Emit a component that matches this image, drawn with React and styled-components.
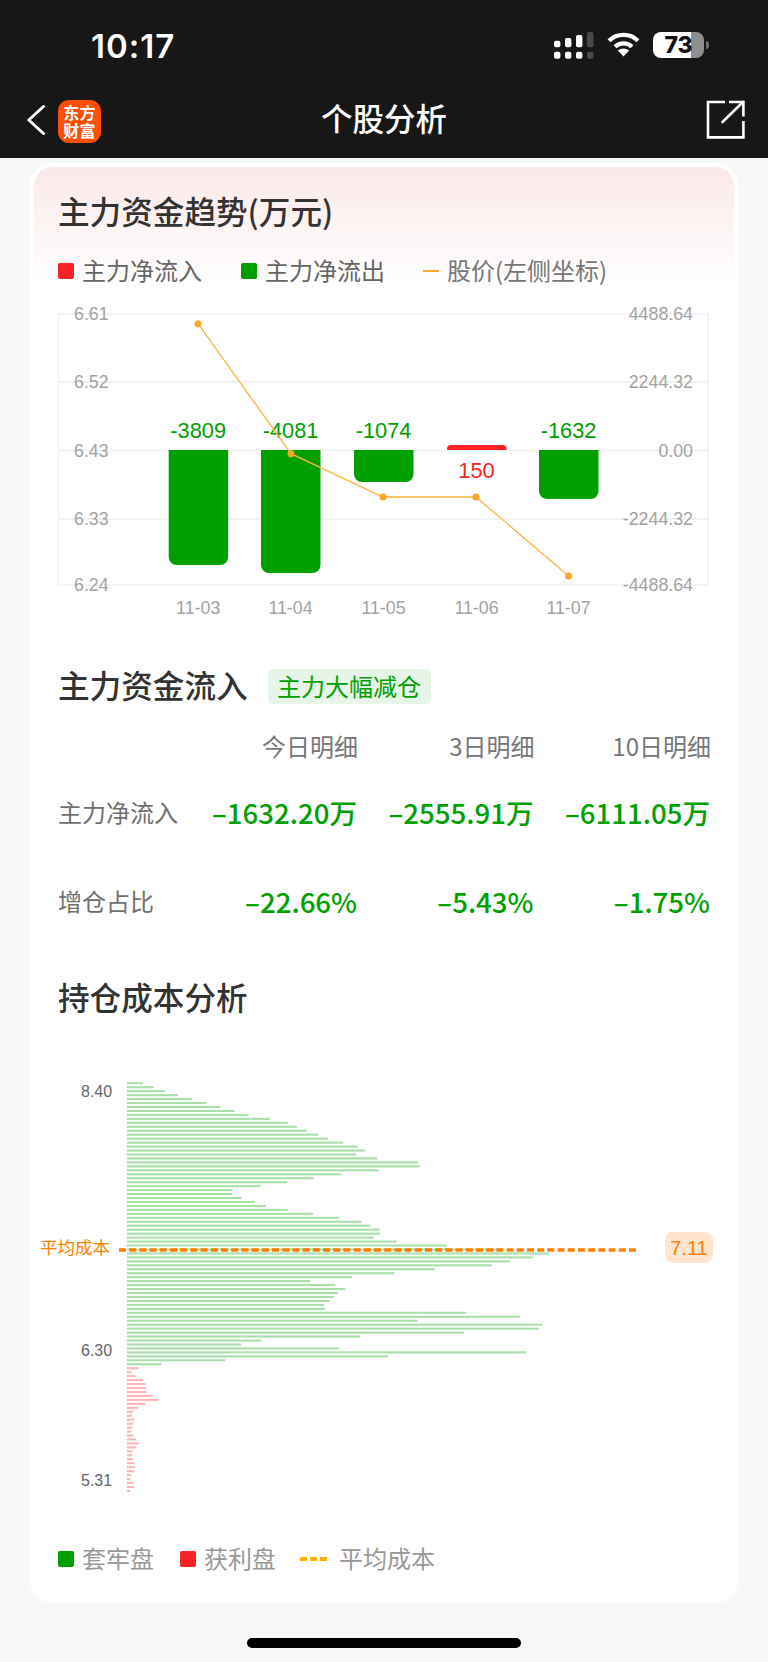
import React from 'react'
import styled, { createGlobalStyle } from 'styled-components'

const GlobalStyle = createGlobalStyle`
  html, body {
    margin: 0;
    padding: 0;
    background: #f7f8fa;
  }
  * {
    box-sizing: border-box;
  }
`

const GREEN = '#009f00'
const RED = '#f92225'

const flowBars = [
  { x: 168.7, date: '11-03', bottom: 565, label: '-3809' },
  { x: 261, date: '11-04', bottom: 573, label: '-4081' },
  { x: 354, date: '11-05', bottom: 482, label: '-1074' },
  { x: 447, date: '11-06', top: 445, label: '150' },
  { x: 539, date: '11-07', bottom: 499, label: '-1632' },
]
const pricePoints = [[198, 323.7], [291, 453.7], [383, 497], [476, 497], [568.6, 576]]
const leftAxis = [['6.61', 314], ['6.52', 382], ['6.43', 450.5], ['6.33', 519], ['6.24', 585]]
const rightAxis = [['4488.64', 314], ['2244.32', 382], ['0.00', 450.5], ['-2244.32', 519], ['-4488.64', 585]]

const lossChips = [
  16.1, 26.6, 38.1, 51, 65.2, 79, 93.2, 107.4, 121.7, 142.8, 160.7, 169.9, 180, 191, 201.1, 216.3, 230.9, 237.8,
  229.1, 250.2, 291.1, 292.9, 252.1, 214.4, 186.9, 160.2, 133.6, 105.6, 105.1, 114.8, 128.1, 139.1, 160.7, 186,
  212.1, 234.6, 243.3, 252.5, 253.4, 246.6, 269.5, 320, 374.7, 421.9, 405.9, 382.9, 364.6, 308, 267.2, 225, 183.2,
  208.4, 218.5, 210.7, 207, 202.9, 197, 197.9, 339.3, 393, 290.6, 415.5, 411.8, 337, 233.2, 134.5, 114.3, 212.1,
  399.4, 261.2, 98.3, 34.4,
]
const profitChips = [
  11.7, 4.5, 8.6, 16.2, 18.6, 18.9, 19.6, 25.8, 31.7, 18.3, 11, 6.2, 5.2, 7.6, 6.5, 5.2, 4.5, 6.5, 9.3, 12, 9.3,
  5.5, 5.2, 6.2, 7.6, 7.9, 7.2, 4.5, 3.4, 6.5, 7.2, 3.1,
]
const CHIP_TOP = 1083.2
const CHIP_PITCH = 3.958

function barPath(bar) {
  const w = 59.5
  if (bar.top) {
    return `M${bar.x} 450V449a4 4 0 0 1 4-4H${bar.x + w - 4}a4 4 0 0 1 4 4V450Z`
  }
  return `M${bar.x} 450V${bar.bottom - 8}a8 8 0 0 0 8 8H${bar.x + w - 8}a8 8 0 0 0 8-8V450Z`
}

export default function App() {
  return (
    <Page>
      <GlobalStyle />
      <Header>
        <StatusBar>
          <Clock>10:17</Clock>
          <StatusIcons>
            <SignalIcon />
            <WifiIcon />
            <Battery>
              <BatteryLevel>73</BatteryLevel>
              <BatteryCap />
            </Battery>
          </StatusIcons>
        </StatusBar>
        <NavBar>
          <BackIcon />
          <Logo>
            <span>东方</span>
            <span>财富</span>
          </Logo>
          <NavTitle>个股分析</NavTitle>
          <ShareIcon />
        </NavBar>
      </Header>

      <Card>
        <CardTitle>主力资金趋势(万元)</CardTitle>
        <Legend $top={22}>
          <LegendItem $color="#666" $width={183}><Swatch $color={RED} />主力净流入</LegendItem>
          <LegendItem $color="#666" $width={182}><Swatch $color={GREEN} />主力净流出</LegendItem>
          <LegendItem $color="#777"><LegendLine />股价(左侧坐标)</LegendItem>
        </Legend>
        <FlowChart />

        <SectionHead>
          <SectionTitle>主力资金流入</SectionTitle>
          <Badge>主力大幅减仓</Badge>
        </SectionHead>
        <DetailTable>
          <HeadRow>
            <span />
            <span>今日明细</span>
            <span>3日明细</span>
            <span>10日明细</span>
          </HeadRow>
          <DataRow>
            <RowLabel>主力净流入</RowLabel>
            <Value>–1632.20万</Value>
            <Value>–2555.91万</Value>
            <Value>–6111.05万</Value>
          </DataRow>
          <DataRow>
            <RowLabel>增仓占比</RowLabel>
            <Value>–22.66%</Value>
            <Value>–5.43%</Value>
            <Value>–1.75%</Value>
          </DataRow>
        </DetailTable>

        <CostTitle>持仓成本分析</CostTitle>
        <ChipChart />
        <Legend $top={44}>
          <LegendItem $color="#999" $width={122}><Swatch $color={GREEN} />套牢盘</LegendItem>
          <LegendItem $color="#999" $width={120}><Swatch $color={RED} />获利盘</LegendItem>
          <LegendItem $color="#999"><LegendDash />平均成本</LegendItem>
        </Legend>
      </Card>
      <HomeBar />
    </Page>
  )
}

function FlowChart() {
  return (
    <ChartSvg $top={13} width="699" height="325" viewBox="34 300 699 325">
      <rect x="58.5" y="314" width="649.5" height="271" fill="none" stroke="#eee" strokeWidth="1.2" />
      {[382, 450.5, 519].map((y) => (
        <line key={y} x1="58.5" x2="708" y1={y} y2={y} stroke="#eee" strokeWidth="1.6" />
      ))}
      {leftAxis.map(([text, y]) => (
        <AxisText key={text} x="74" y={y + 6}>{text}</AxisText>
      ))}
      {rightAxis.map(([text, y]) => (
        <AxisText key={text} x="693" y={y + 6} textAnchor="end">{text}</AxisText>
      ))}
      {flowBars.map((bar) => (
        <g key={bar.date}>
          <path d={barPath(bar)} fill={bar.top ? RED : GREEN} />
          <BarLabel x={bar.x + 29.5} y={bar.top ? 477.5 : 437.5} fill={bar.top ? RED : GREEN}>{bar.label}</BarLabel>
          <AxisText x={bar.x + 29.5} y="614" textAnchor="middle">{bar.date}</AxisText>
        </g>
      ))}
      <polyline points={pricePoints.map((p) => p.join(',')).join(' ')} fill="none" stroke="#ffb23f" strokeWidth="1.3" />
      {pricePoints.map(([x, y]) => (
        <circle key={x} cx={x} cy={y} r="3.5" fill="#fba725" />
      ))}
    </ChartSvg>
  )
}

function ChipChart() {
  const chips = [
    ...lossChips.map((w) => ({ w, color: '#a9e0a9' })),
    ...profitChips.map((w) => ({ w, color: '#ffb5b6' })),
  ]
  return (
    <ChartSvg $top={53} width="699" height="430" viewBox="34 1070 699 430">
      <PriceText x="81" y="1098">8.40</PriceText>
      <PriceText x="81" y="1357">6.30</PriceText>
      <PriceText x="81" y="1487">5.31</PriceText>
      {chips.map((chip, i) => (
        <rect key={i} x="127" y={CHIP_TOP + i * CHIP_PITCH} width={chip.w} height="2.1" fill={chip.color} />
      ))}
      <AvgText x="40" y="1255">平均成本</AvgText>
      <line x1="119" x2="636" y1="1251" y2="1251" stroke="#ff8000" strokeWidth="3.6" strokeDasharray="7 3.2" />
      <rect x="665" y="1233" width="48" height="31" rx="8" fill="#ffe5cf" />
      <AvgValue x="689" y="1256" textAnchor="middle">7.11</AvgValue>
    </ChartSvg>
  )
}

function SignalIcon() {
  const cols = [[553, 40.7], [564, 38], [575, 35], [586, 32]]
  return (
    <svg width="40" height="28" viewBox="553 32 40 28">
      {cols.map(([x, top], i) => (
        <g key={x} fill={i === 3 ? '#4a4a4a' : '#fff'}>
          <rect x={x} y={top} width="6.4" height={47.3 - top} rx="2" />
          <rect x={x} y="51.7" width="6.4" height="7" rx="2" />
        </g>
      ))}
    </svg>
  )
}

function WifiIcon() {
  return (
    <svg width="33" height="25" viewBox="0 0 33 25">
      <g fill="none" stroke="#fff" strokeWidth="4.2">
        <path d="M2 8.8C10 1 23 1 31 8.8" />
        <path d="M8 14.8C12.8 10.2 20.2 10.2 25 14.8" />
      </g>
      <path d="M10.8 18.6C14 15.8 19 15.8 22.2 18.6L16.5 24.6Z" fill="#fff" />
    </svg>
  )
}

function BackIcon() {
  return (
    <BackSvg width="18" height="32" viewBox="0 0 18 32">
      <path d="M16.5 2.5L1.8 16L16.5 29.5" fill="none" stroke="#fff" strokeWidth="3" strokeLinecap="round" strokeLinejoin="round" />
    </BackSvg>
  )
}

function ShareIcon() {
  return (
    <ShareSvg width="39" height="39" viewBox="0 0 39 39">
      <g fill="none" stroke="#fff" strokeWidth="2.6">
        <path d="M19 2H2V37.4H37.4V21" />
        <path d="M23 2H37.4V16.5" />
        <path d="M37 2L16.5 22" strokeLinecap="round" />
      </g>
    </ShareSvg>
  )
}

const Page = styled.div`
  width: 768px;
  height: 1662px;
  overflow: hidden;
  background: #f7f8fa;
  font-family: "Noto Sans CJK SC", "Liberation Sans", sans-serif;
`

const Header = styled.header`
  height: 158px;
  background: #171717;
  color: #fff;
`

const StatusBar = styled.div`
  height: 85px;
  padding: 32px 59px 0 91px;
  display: flex;
  justify-content: space-between;
  align-items: flex-start;
`

const Clock = styled.div`
  font-family: Inter, "Liberation Sans", sans-serif;
  font-size: 33px;
  font-weight: 600;
  line-height: 28px;
  letter-spacing: 1px;
`

const StatusIcons = styled.div`
  display: flex;
  align-items: flex-start;
  gap: 13px;
  height: 28px;
`

const Battery = styled.div`
  display: flex;
  align-items: center;
  gap: 2px;
`

const BatteryLevel = styled.div`
  width: 51px;
  height: 26px;
  border-radius: 8px;
  background: linear-gradient(90deg, #fff 37.7px, #8e8e8e 37.7px);
  color: #111;
  font-family: Inter, "Liberation Sans", sans-serif;
  font-size: 23px;
  font-weight: 800;
  line-height: 26px;
  text-align: center;
`

const BatteryCap = styled.div`
  width: 3px;
  height: 8px;
  border-radius: 0 3px 3px 0;
  background: #6f6f6f;
`

const NavBar = styled.nav`
  height: 73px;
  padding-left: 27px;
  display: flex;
  align-items: center;
`

const BackSvg = styled.svg`
  display: block;
  margin-top: -3px;
`

const Logo = styled.div`
  width: 43px;
  height: 43px;
  margin: -1px 0 0 13px;
  border-radius: 11px;
  background: #fb4e06;
  color: #fff;
  font-size: 16px;
  font-weight: 700;
  line-height: 18px;
  letter-spacing: 0.2px;
  display: flex;
  flex-direction: column;
  align-items: center;
  justify-content: center;
`

const NavTitle = styled.div`
  margin: -9px 0 0 220px;
  font-size: 31.5px;
  font-weight: 500;
  line-height: 42px;
  white-space: nowrap;
`

const ShareSvg = styled.svg`
  display: block;
  margin: -5px 23px 0 auto;
`

const Card = styled.section`
  width: 708px;
  height: 1440px;
  margin: 5px 0 0 30px;
  padding: 26px 24px 0 24px;
  border: 4px solid #fff;
  border-radius: 22px;
  background: linear-gradient(#fbe8e8, #fff 118px) padding-box, #fff;
`

const CardTitle = styled.h2`
  margin: -3px 0 0;
  padding-bottom: 3px;
  color: #333;
  font-size: 31.6px;
  font-weight: 500;
  line-height: 40px;
`

const Legend = styled.div`
  display: flex;
  margin-top: ${(p) => p.$top}px;
  height: 32px;
`

const LegendItem = styled.div`
  display: flex;
  align-items: center;
  width: ${(p) => (p.$width ? `${p.$width}px` : 'auto')};
  padding-bottom: 3px;
  color: ${(p) => p.$color};
  font-size: 24px;
  line-height: 29px;
  white-space: nowrap;
`

const Swatch = styled.i`
  width: 16px;
  height: 16px;
  margin: 3px 8px 0 0;
  border-radius: 2px;
  background: ${(p) => p.$color};
`

const LegendLine = styled.i`
  width: 16px;
  height: 2px;
  margin: 3px 8px 0 0;
  background: #ffa53a;
`

const LegendDash = styled.i`
  width: 27px;
  height: 3.5px;
  margin: 3px 12px 0 0;
  background: repeating-linear-gradient(90deg, #ffb000 0 7px, transparent 7px 10px);
`

const ChartSvg = styled.svg`
  display: block;
  margin-left: -24px;
  margin-top: ${(p) => p.$top || 0}px;
`

const AxisText = styled.text`
  fill: #a3a3a3;
  font-family: "Liberation Sans", sans-serif;
  font-size: 17.8px;
`

const BarLabel = styled.text`
  font-family: "Liberation Sans", sans-serif;
  font-size: 21.8px;
  text-anchor: middle;
`

const PriceText = styled.text`
  fill: #666;
  font-family: "Liberation Sans", sans-serif;
  font-size: 16px;
`

const AvgText = styled.text`
  fill: #ff8000;
  font-size: 17.5px;
`

const AvgValue = styled.text`
  fill: #ff8000;
  font-family: "Liberation Sans", sans-serif;
  font-size: 20px;
`

const SectionHead = styled.div`
  display: flex;
  align-items: center;
  margin-top: 42px;
  height: 40px;
`

const SectionTitle = styled.h3`
  margin: -3px 0 0;
  padding-bottom: 3px;
  color: #333;
  font-size: 31.6px;
  font-weight: 500;
  line-height: 40px;
`

const Badge = styled.span`
  margin: -1px 0 0 20px;
  height: 35px;
  padding: 0 9.5px;
  border-radius: 5px;
  background: #e7f5e9;
  color: #00a000;
  font-size: 24px;
  line-height: 34px;
`

const DetailTable = styled.div`
  margin-top: 18px;
`

const rowColumns = `
  display: grid;
  grid-template-columns: 1fr 176.5px 176.5px 176.5px;
  align-items: center;
  text-align: right;
`

const HeadRow = styled.div`
  ${rowColumns}
  height: 40px;
  margin: 0 -1px 2px 0;
  color: #777;
  font-size: 24px;
`

const DataRow = styled.div`
  ${rowColumns}
  height: 89px;
`

const RowLabel = styled.span`
  color: #707070;
  font-size: 24px;
  text-align: left;
  white-space: nowrap;
`

const Value = styled.span`
  color: #00a000;
  font-size: 27.6px;
  font-weight: 500;
  white-space: nowrap;
`

const CostTitle = styled(SectionTitle)`
  margin: 31px 0 0;
  padding-bottom: 0;
`

const HomeBar = styled.div`
  width: 274px;
  height: 9.5px;
  margin: 35px 0 0 247px;
  border-radius: 5px;
  background: #000;
`
